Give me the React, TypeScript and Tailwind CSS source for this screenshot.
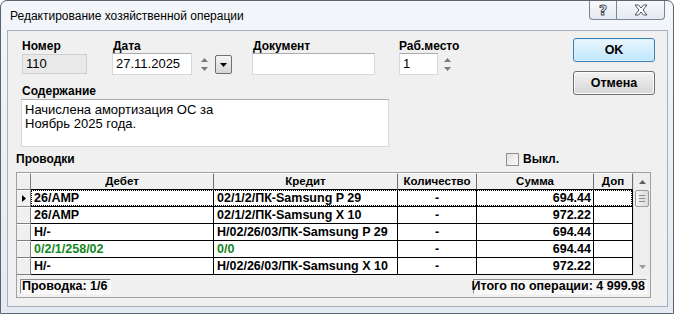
import React from "react";

type Row = {
  debit: string;
  credit: string;
  qty: string;
  sum: string;
  green?: boolean;
};

const rows: Row[] = [
  { debit: "26/AMP", credit: "02/1/2/ПК-Samsung P 29", qty: "-", sum: "694.44" },
  { debit: "26/AMP", credit: "02/1/2/ПК-Samsung X 10", qty: "-", sum: "972.22" },
  { debit: "Н/-", credit: "Н/02/26/03/ПК-Samsung P 29", qty: "-", sum: "694.44" },
  { debit: "0/2/1/258/02", credit: "0/0", qty: "-", sum: "694.44", green: true },
  { debit: "Н/-", credit: "Н/02/26/03/ПК-Samsung X 10", qty: "-", sum: "972.22" },
];

// Column widths include the 1px right border
const colW = ["w-[183px]", "w-[184px]", "w-[79px]", "w-[117px]", "w-[39px]"];

function Spinner({ w }: { w: string }) {
  return (
    <div className={`${w} h-[22px] flex flex-col items-center justify-center gap-[5px]`}>
      <svg width="7" height="4" viewBox="0 0 7 4">
        <path d="M3.5 0 L7 4 L0 4 Z" fill="#7a7a7a" />
      </svg>
      <svg width="7" height="4" viewBox="0 0 7 4">
        <path d="M0 0 L7 0 L3.5 4 Z" fill="#7a7a7a" />
      </svg>
    </div>
  );
}

function TextBox({ className, children }: { className: string; children?: React.ReactNode }) {
  return (
    <div
      className={`${className} bg-white border border-[#d5d9df] border-t-[#abadb3] text-[13px] leading-[20px] px-[3px] text-black`}
    >
      {children}
    </div>
  );
}

function TitleButtons() {
  return (
    <div className="flex h-[19px] mr-[8px]">
      <div className="w-[28px] h-full border border-t-0 border-[#7b8593] rounded-bl-[4px] bg-gradient-to-b from-[#f7f9fc] to-[#e3e9f1] flex items-center justify-center">
        <span className="text-[14px] font-bold leading-none text-white [-webkit-text-stroke:1px_#4d535b] font-['DejaVu_Sans',sans-serif]">
          ?
        </span>
      </div>
      <div className="w-[48px] h-full border border-t-0 border-l-0 border-[#7b8593] rounded-br-[4px] bg-gradient-to-b from-[#f7f9fc] to-[#e3e9f1] flex items-center justify-center">
        <svg width="14" height="12" viewBox="0 0 14 12">
          <path
            d="M1 1 H4.5 L7 4 L9.5 1 H13 L9 6 L13 11 H9.5 L7 8 L4.5 11 H1 L5 6 Z"
            fill="#ffffff"
            stroke="#4d535b"
            strokeWidth="1"
            strokeLinejoin="round"
          />
        </svg>
      </div>
    </div>
  );
}

function ScrollBar() {
  return (
    <div className="w-[17px] h-[102px] flex flex-col bg-[#eeeeee] border-l border-[#e2e2e2]">
      <div className="h-[17px] flex items-center justify-center">
        <svg width="7" height="4" viewBox="0 0 7 4">
          <path d="M3.5 0 L7 4 L0 4 Z" fill="#606060" />
        </svg>
      </div>
      <div className="h-[17px] mx-[1px] border border-[#9b9b9b] rounded-[2px] bg-gradient-to-r from-[#f3f3f3] to-[#dcdcdc] flex flex-col items-center justify-center gap-[2px]">
        <div className="w-[6px] h-[1px] bg-[#8a8a8a]" />
        <div className="w-[6px] h-[1px] bg-[#8a8a8a]" />
        <div className="w-[6px] h-[1px] bg-[#8a8a8a]" />
      </div>
      <div className="flex-1" />
      <div className="h-[17px] flex items-center justify-center">
        <svg width="7" height="4" viewBox="0 0 7 4">
          <path d="M0 0 L7 0 L3.5 4 Z" fill="#9a9a9a" />
        </svg>
      </div>
    </div>
  );
}

function EntriesGrid() {
  const headers = ["Дебет", "Кредит", "Количество", "Сумма", "Доп"];
  return (
    <div className="ml-[8px] w-[635px] h-[126px] border border-[#a0a0a0] bg-[#f0f0f0] flex flex-col">
      <div className="flex">
        <div className="flex flex-col">
          {/* Header */}
          <div className="flex h-[17px]">
            <div className="w-[14px] h-full bg-[#f0f0f0] border-r border-b border-[#808080] border-t border-t-white" />
            {headers.map((h, i) => (
              <div
                key={h}
                className={`${colW[i]} h-full bg-[#f0f0f0] border-t border-t-white border-r border-r-[#6d6d6d] border-b border-b-black flex items-center justify-center text-[11.5px] font-bold leading-none`}
              >
                {h}
              </div>
            ))}
          </div>
          {/* Rows */}
          {rows.map((r, idx) => (
            <div key={idx} className="flex h-[17px]">
              <div className="w-[14px] h-full bg-[#f0f0f0] border-t border-t-white border-r border-r-[#808080] border-b border-b-[#808080] flex items-center justify-center">
                {idx === 0 && (
                  <svg width="4" height="7" viewBox="0 0 4 7">
                    <path d="M0 0 L4 3.5 L0 7 Z" fill="#000" />
                  </svg>
                )}
              </div>
              <div
                className={`relative flex bg-white text-[12.5px] font-bold leading-none ${
                  r.green ? "text-[#12861d]" : "text-black"
                }`}
              >
                <div className={`${colW[0]} h-full border-r border-b border-black flex items-center pl-[3px] whitespace-nowrap overflow-hidden`}>
                  {r.debit}
                </div>
                <div className={`${colW[1]} h-full border-r border-b border-black flex items-center pl-[3px] whitespace-nowrap overflow-hidden`}>
                  {r.credit}
                </div>
                <div className={`${colW[2]} h-full border-r border-b border-black flex items-center justify-center text-black`}>
                  {r.qty}
                </div>
                <div className={`${colW[3]} h-full border-r border-b border-black flex items-center justify-end pr-[2px] text-black`}>
                  {r.sum}
                </div>
                <div className={`${colW[4]} h-full border-r border-b border-black`} />
                {idx === 0 && (
                  <div className="absolute left-0 top-0 right-[1px] bottom-[1px] border border-dotted border-black pointer-events-none" />
                )}
              </div>
            </div>
          ))}
        </div>
        <ScrollBar />
      </div>
      {/* Status */}
      <div className="flex justify-between items-start pt-[4px] px-[3px] text-[12.5px] font-bold leading-none">
        <div className="h-[15px] w-[91px] border border-[#8c8c8c] border-r-[#ffffff] border-b-[#ffffff] bg-[#f7f7f7] flex items-center pl-[1px] whitespace-nowrap">
          Проводка: 1/6
        </div>
        <div className="h-[15px] w-[174px] border border-[#8c8c8c] border-r-[#ffffff] border-b-[#ffffff] bg-[#f7f7f7] flex items-center justify-end pr-[1px] whitespace-nowrap">
          Итого по операции: 4 999.98
        </div>
      </div>
    </div>
  );
}

export default function App() {
  return (
    <div className="w-[674px] h-[314px] bg-white font-['Liberation_Sans',Arial,sans-serif] text-black">
      <div className="w-[674px] h-[314px] border border-[#5c6470] rounded-t-[7px] bg-gradient-to-b from-[#f3f6fa] to-[#e4eaf2] flex flex-col">
        {/* Title bar */}
        <div className="h-[29px] flex justify-between items-start">
          <div className="pl-[9px] pt-[8px] text-[12px] leading-[14px] text-black">
            Редактирование хозяйственной операции
          </div>
          <TitleButtons />
        </div>

        {/* Client area */}
        <div className="ml-[6px] w-[661px] h-[277px] border border-[#a6b0bc] bg-[#f0f0f0]">
          <div className="flex">
            {/* Fields */}
            <div className="pl-[14px] pt-[8px]">
              <div className="flex items-start text-[12px] font-bold leading-[14px]">
                <div className="w-[65px]">
                  <div className="h-[14px]">Номер</div>
                  <div className="mt-[1px] h-[20px] w-[65px] border border-[#cfcfcf] bg-[#e9e9e9] text-[13px] font-normal leading-[18px] px-[3px]">
                    110
                  </div>
                </div>
                <div className="ml-[25px]">
                  <div className="h-[14px] pl-[1px]">Дата</div>
                  <div className="flex items-start">
                    <TextBox className="w-[80px] h-[22px] font-normal">27.11.2025</TextBox>
                    <div className="ml-[5px]">
                      <Spinner w="w-[14px]" />
                    </div>
                    <div className="ml-[4px] mt-[2px] w-[17px] h-[19px] border border-[#707070] rounded-[2px] bg-gradient-to-b from-[#f4f4f4] to-[#d6d6d6] flex items-center justify-center">
                      <svg width="7" height="4" viewBox="0 0 7 4">
                        <path d="M0 0 L7 0 L3.5 4 Z" fill="#000" />
                      </svg>
                    </div>
                  </div>
                </div>
                <div className="ml-[20px]">
                  <div className="h-[14px] pl-[1px]">Документ</div>
                  <TextBox className="w-[123px] h-[22px] font-normal" />
                </div>
                <div className="ml-[24px]">
                  <div className="h-[14px]">Раб.место</div>
                  <div className="flex items-start">
                    <TextBox className="w-[39px] h-[22px] font-normal">1</TextBox>
                    <div className="ml-[4px]">
                      <Spinner w="w-[11px]" />
                    </div>
                  </div>
                </div>
              </div>

              <div className="mt-[9px] h-[14px] text-[12px] font-bold leading-[14px]">
                Содержание
              </div>
              <div className="mt-[1px] -ml-[1px] w-[368px] h-[48px] bg-white border border-[#d5d9df] border-t-[#abadb3] px-[3px] pt-[3px] text-[13px] leading-[14px]">
                Начислена амортизация ОС за
                <br />
                Ноябрь 2025 года.
              </div>
            </div>

            {/* Buttons */}
            <div className="ml-auto mr-[12px] mt-[7px] flex flex-col gap-[9px] text-[12.5px] font-bold">
              <button className="w-[82px] h-[24px] rounded-[3px] border border-[#3c7fb1] bg-gradient-to-b from-[#eaf6fd] to-[#bee6fd] shadow-[inset_0_0_0_1px_#d8f0fc] leading-none">
                OK
              </button>
              <button className="w-[82px] h-[24px] rounded-[3px] border border-[#707070] bg-gradient-to-b from-[#f2f2f2] to-[#d6d6d6] shadow-[inset_0_0_0_1px_#fcfcfc] leading-none">
                Отмена
              </button>
            </div>
          </div>

          {/* Entries caption */}
          <div className="mt-[4px] h-[16px] flex items-center text-[12px] font-bold leading-none">
            <div className="pl-[8px] w-[498px]">Проводки</div>
            <div className="w-[13px] h-[13px] border border-[#8f8f8f] bg-gradient-to-br from-[#e2e2e2] to-[#fbfbfb]" />
            <div className="ml-[4px]">Выкл.</div>
          </div>

          <div className="mt-[5px]">
            <EntriesGrid />
          </div>
        </div>
      </div>
    </div>
  );
}
